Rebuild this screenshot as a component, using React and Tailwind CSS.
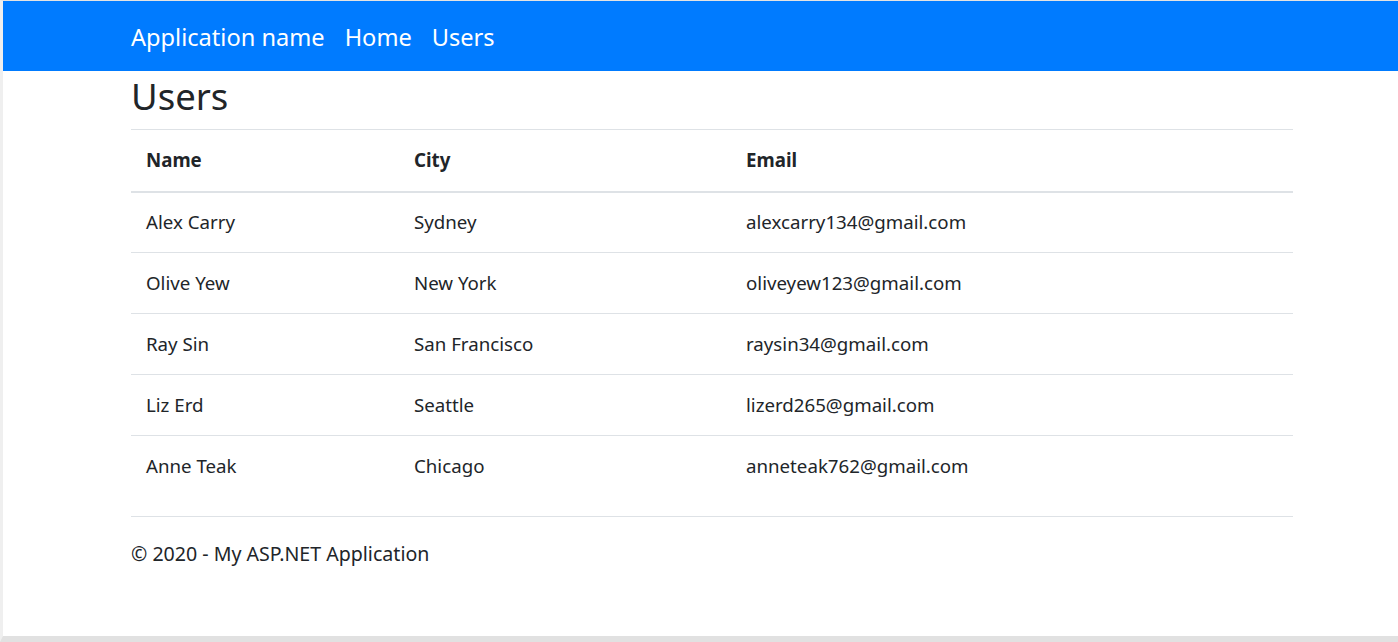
const users = [
  { name: "Alex Carry", city: "Sydney", email: "alexcarry134@gmail.com" },
  { name: "Olive Yew", city: "New York", email: "oliveyew123@gmail.com" },
  { name: "Ray Sin", city: "San Francisco", email: "raysin34@gmail.com" },
  { name: "Liz Erd", city: "Seattle", email: "lizerd265@gmail.com" },
  { name: "Anne Teak", city: "Chicago", email: "anneteak762@gmail.com" },
];

const App = () => {
  return (
    <div
      className="h-[642px] bg-white border-l-[3px] border-l-[#efefef] border-t border-t-[#e3e3e3] border-b-[6px] border-b-[#e1e1e1] text-[#212529] overflow-hidden"
      style={{ fontFamily: '"Noto Sans", "Open Sans", sans-serif' }}
    >
      {/* navbar */}
      <nav className="h-[70px] bg-[#007bff] flex items-center pl-[128px] pt-[4px]">
        <a className="text-white text-[23.6px] mr-[20px]">Application name</a>
        <a className="text-white text-[23.6px] mr-[20px]">Home</a>
        <a className="text-white text-[23.6px]">Users</a>
      </nav>

      <div className="pl-[128px] w-[1290px]">
        <h2 className="text-[36.5px] leading-[50px] mb-[8px]">Users</h2>

        <table className="w-full text-[18.7px] border-collapse">
          <thead>
            <tr className="border-t border-[#dee2e6]">
              <th className="w-[268px] text-left font-bold px-[15px] h-[62px] border-b-2 border-[#dee2e6]">Name</th>
              <th className="w-[332px] text-left font-bold px-[15px] border-b-2 border-[#dee2e6]">City</th>
              <th className="text-left font-bold px-[15px] border-b-2 border-[#dee2e6]">Email</th>
            </tr>
          </thead>
          <tbody>
            {users.map((u, i) => (
              <tr key={u.email} className={i > 0 ? "border-t border-[#dee2e6]" : ""}>
                <td className="px-[15px] h-[61px]">{u.name}</td>
                <td className="px-[15px]">{u.city}</td>
                <td className="px-[15px]">{u.email}</td>
              </tr>
            ))}
          </tbody>
        </table>

        <hr className="mt-[19px] border-[#dee2e6]" />
        <footer className="text-[19.6px] pt-[22px]">
          <p>© 2020 - My ASP.NET Application</p>
        </footer>
      </div>
    </div>
  );
};

export default App;
